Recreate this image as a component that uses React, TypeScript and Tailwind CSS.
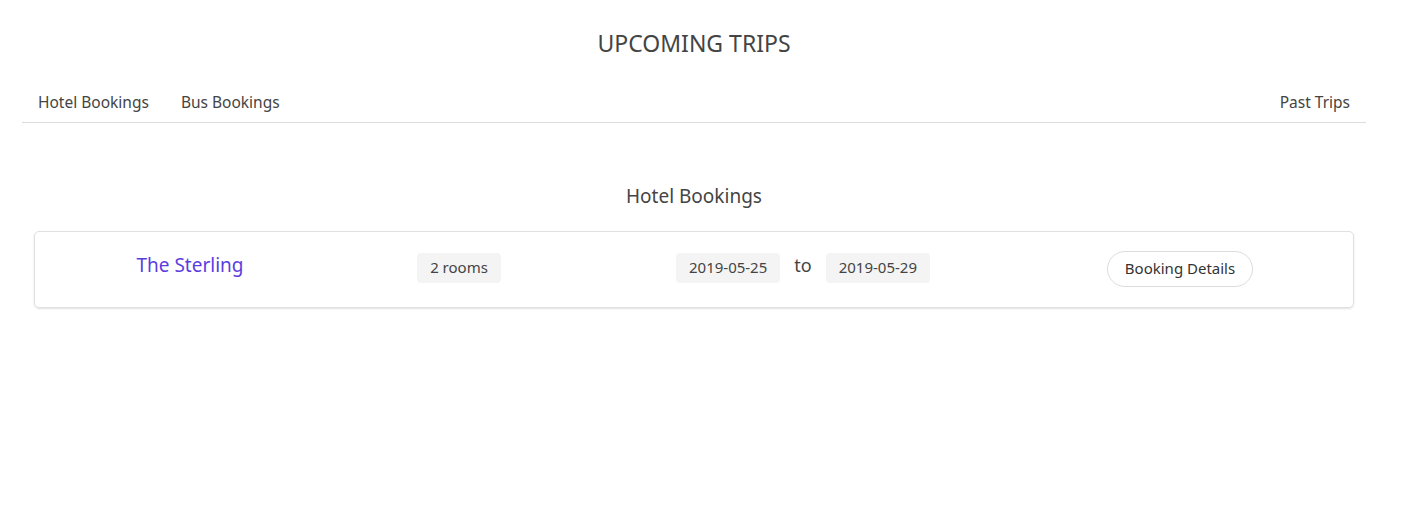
const font = { fontFamily: '"Noto Sans", "Open Sans", sans-serif' };

function Pill({ children }: { children: React.ReactNode }) {
  return (
    <span className="inline-flex h-[30px] items-center rounded-[4px] bg-[#f4f4f4] px-[13px] text-[15px] text-[#444]">
      {children}
    </span>
  );
}

export default function App() {
  return (
    <div className="min-h-[521px] w-[1388px] bg-white text-[#444]" style={font}>
      <h1 className="pt-[26px] text-center text-[23px] leading-[34px] text-[#444]">UPCOMING TRIPS</h1>

      <nav className="ml-[22px] mt-[31px] flex w-[1344px] items-center border-b border-[#dcdcdc] px-4 pb-[9px] text-[15.5px]">
        <a className="mr-8 leading-[22px]">Hotel Bookings</a>
        <a className="leading-[22px]">Bus Bookings</a>
        <a className="ml-auto leading-[22px]">Past Trips</a>
      </nav>

      <h2 className="mt-[60px] text-center text-[19px] leading-[26px]">Hotel Bookings</h2>

      <div className="ml-[34px] mt-[22px] grid h-[77px] w-[1320px] grid-cols-[310px_228px_460px_294px] items-center rounded-[5px] border border-[#e0e0e0] pb-[4px] pr-[28px] shadow-[0_1px_2px_rgba(0,0,0,0.12)]">
        <div className="-mt-[4px] text-center text-[19px] text-[#5b3ddf]">The Sterling</div>
        <div className="text-center">
          <Pill>2 rooms</Pill>
        </div>
        <div className="flex items-center justify-center gap-[14px]">
          <Pill>2019-05-25</Pill>
          <span className="-mt-[4px] text-[18px]">to</span>
          <Pill>2019-05-29</Pill>
        </div>
        <div className="text-center">
          <button className="mt-[2px] h-[36px] rounded-full border border-[#dcdcdc] bg-white px-[17px] text-[15px] text-[#333]">
            Booking Details
          </button>
        </div>
      </div>
    </div>
  );
}
